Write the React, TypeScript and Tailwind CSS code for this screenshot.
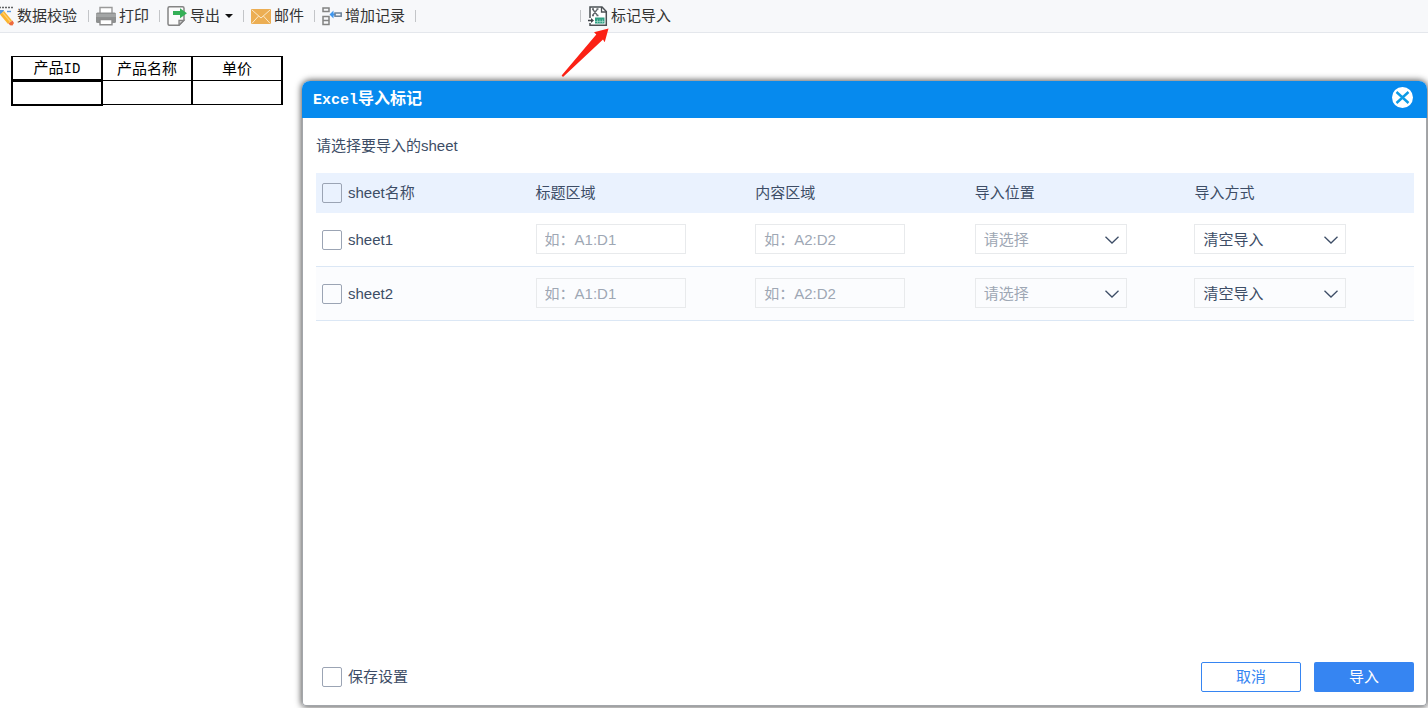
import type { ReactNode } from 'react';

interface SheetRow {
  id: string;
  name: string;
}

const sheets: SheetRow[] = [
  { id: 's1', name: 'sheet1' },
  { id: 's2', name: 'sheet2' },
];

const columns = ['标题区域', '内容区域', '导入位置', '导入方式'];

function CheckIcon() {
  return (
    <svg width="20" height="20" viewBox="0 0 20 20" fill="none" className="shrink-0">
      <path d="M5 1.500h14" stroke="#5f6264" strokeWidth="1.400" strokeDasharray="2 1" />
      <path d="M13 5.500h4" stroke="#5b9be0" strokeWidth="1.400" />
      <path d="M5 4h5l-1 2.500-4 2.500z" fill="#5b9be0" />
      <path d="M6 8.500l4-3.500 8 9.500-4 3.500z" fill="#fbb42f" />
      <path d="M8 6.800l1-.8 8 9.500-1 .8z" fill="#fdd078" />
      <path d="M14.500 17.500l4-3 1.500 2.500-1.500 2.500-2.500-.2z" fill="#ee6a3c" />
    </svg>
  );
}

function PrintIcon() {
  return (
    <svg width="20" height="20" viewBox="0 0 20 20" className="shrink-0">
      <path d="M4 8V1.500h12V8" fill="#fff" stroke="#9a9a9a" strokeWidth="1.400" />
      <rect x="0" y="6.500" width="20" height="10.500" rx="1.500" fill="#8f9191" />
      <rect x="0" y="8" width="20" height="3" fill="#a3a5a5" />
      <path d="M4 13.500h12v5.200H4z" fill="#fff" stroke="#8c8c8c" strokeWidth="1.400" />
    </svg>
  );
}

function ExportIcon() {
  return (
    <svg width="20" height="20" viewBox="0 0 20 20" className="shrink-0">
      <path d="M2.500 .8h13q1.500 0 1.500 1.500v12l-5 5H2.500q-1.500 0-1.500-1.500V2.300q0-1.500 1.500-1.500z" fill="#fbfbfb" stroke="#848484" strokeWidth="1.500" />
      <path d="M16.800 14.300h-4.800v4.800z" fill="#ccc" stroke="#848484" strokeWidth="1.300" />
      <path d="M6 5h7V2.300l7 5-7 5V9H6z" fill="#35b057" />
    </svg>
  );
}

function MailIcon() {
  return (
    <svg width="20" height="20" viewBox="0 0 20 20" fill="none" className="shrink-0">
      <rect x="0" y="3" width="20" height="15" rx="1" fill="#ecae53" />
      <path d="M1 4l9 8 9-8M1 17.300l6.500-7.200M19 17.300l-6.500-7.200" stroke="#fbeacb" strokeWidth="1" />
    </svg>
  );
}

function AddRecordIcon() {
  return (
    <svg width="20" height="20" viewBox="0 0 20 20" fill="none" className="shrink-0">
      <path d="M1 2h6v3.500H1zM1 10.500h6v8H1zM1 14.500h6" stroke="#838383" strokeWidth="1.500" />
      <path d="M7.500 8.500l4-4v3h2v2h-2v3z" fill="#3f96ee" />
      <rect x="13" y="7" width="6.200" height="3.200" stroke="#6c8299" strokeWidth="1.500" />
    </svg>
  );
}

function MarkImportIcon() {
  return (
    <svg width="20" height="20" viewBox="0 0 20 20" fill="none" className="shrink-0">
      <path d="M2 12V1h12l4.300 4.500v13.700H2V17" fill="#fff" stroke="#4b5054" strokeWidth="1.500" />
      <path d="M13.500 1v5h5" stroke="#4b5054" strokeWidth="1.300" />
      <path d="M4.500 3l5 6.500M9.500 3l-5 6.500M4 3h2M8.500 3h2M4 9.500h2M8.500 9.500h2" stroke="#63686c" strokeWidth="1.300" />
      <path d="M0 14.500h4" stroke="#3e4347" strokeWidth="1.500" />
      <path d="M3 12l3 2.500-3 2.500z" fill="#3e4347" />
      <rect x="7" y="11.500" width="9.500" height="6" fill="#2f9f83" />
      <path d="M9.500 13.500v3.500M12 13.500v3.500M14.500 13.500v3.500M7 15.500h9.500" stroke="#b5e0d3" strokeWidth=".6" />
    </svg>
  );
}

function Separator() {
  return <span className="h-3 w-px shrink-0 bg-[#c3c5c8]" />;
}

function ToolButton({ icon, children }: { icon: ReactNode; children: ReactNode }) {
  return (
    <button type="button" className="mr-2.5 ml-[7px] flex shrink-0 items-center gap-[3px] whitespace-nowrap">
      {icon}
      {children}
    </button>
  );
}

function Checkbox({ id }: { id: string }) {
  return (
    <input
      id={id}
      type="checkbox"
      className="size-5 shrink-0 appearance-none rounded-xs border border-[#9ba4b4] checked:bg-[#3685f2]"
    />
  );
}

function Select({ label, options, muted }: { label: string; options: string[]; muted?: boolean }) {
  return (
    <div className="relative w-[152px]">
      <select
        aria-label={label}
        className={`block h-[30px] w-full appearance-none rounded-none border border-[#e8eaec] bg-transparent px-2 pt-0.5 ${
          muted ? 'text-[#9ea7b4]' : 'text-[#3d4d66]'
        }`}
      >
        {options.map((option) => (
          <option key={option}>{option}</option>
        ))}
      </select>
      <svg
        width="14"
        height="8"
        viewBox="0 0 14 8"
        fill="none"
        className="pointer-events-none absolute top-3 right-2"
      >
        <path d="M.5 .8L7 7 13.500 .8" stroke="#3d4d66" strokeWidth="1.300" />
      </svg>
    </div>
  );
}

function Toolbar() {
  return (
    <header className="flex h-[33px] items-center overflow-hidden border-b border-[#e4e7ec] bg-[#f7f8fa] text-[#333]">
      <div className="mr-px -ml-[13px] flex items-center">
        <ToolButton icon={<CheckIcon />}>数据校验</ToolButton>
      </div>
      <Separator />
      <ToolButton icon={<PrintIcon />}>打印</ToolButton>
      <Separator />
      <ToolButton icon={<ExportIcon />}>
        导出
        <svg width="8" height="4" viewBox="0 0 8 4" className="ml-0.5">
          <path d="M0 0h8L4 4z" fill="#111" />
        </svg>
      </ToolButton>
      <Separator />
      <ToolButton icon={<MailIcon />}>邮件</ToolButton>
      <Separator />
      <ToolButton icon={<AddRecordIcon />}>增加记录</ToolButton>
      <Separator />
      <div className="ml-[164px] flex items-center">
        <Separator />
        <ToolButton icon={<MarkImportIcon />}>标记导入</ToolButton>
      </div>
    </header>
  );
}

function ProductTable() {
  return (
    <table className="mt-[23px] ml-[11px] w-[272px] table-fixed border-collapse text-black">
      <thead>
        <tr className="h-6">
          <th className="border-x-2 border-y border-black p-0 leading-5 font-normal">
            产品<span className="font-['Liberation_Mono',monospace] text-sm">ID</span>
          </th>
          <th className="border-x-2 border-y border-black p-0 leading-5 font-normal">产品名称</th>
          <th className="border-x-2 border-y border-black p-0 leading-5 font-normal">单价</th>
        </tr>
      </thead>
      <tbody>
        <tr className="h-6">
          <td className="border-2 border-t-3 border-black" />
          <td className="border-x-2 border-y border-black" />
          <td className="border-x-2 border-y border-black" />
        </tr>
      </tbody>
    </table>
  );
}

function ImportDialog() {
  return (
    <section
      role="dialog"
      aria-label="Excel导入标记"
      className="absolute top-[81px] right-px bottom-0.5 left-[302px] flex flex-col rounded-t-lg rounded-b shadow-[0_0_6px_1px_rgba(0,0,0,0.65)]"
    >
      <div className="flex h-[37px] shrink-0 items-center justify-between rounded-t-lg bg-[#068aee] pr-3.5 pl-[11px] text-white">
        <h1 className="text-base font-bold">
          <span className="font-['Liberation_Mono',monospace] text-[15px]">Excel</span>导入标记
        </h1>
        <button type="button" aria-label="关闭" className="mb-1">
          <svg width="21" height="21" viewBox="0 0 21 21" className="block">
            <circle cx="10.500" cy="10.500" r="10.500" fill="#fff" />
            <path d="M4.500 5l12 11M16.500 5l-12 11" stroke="#0b9be6" strokeWidth="2.400" />
          </svg>
        </button>
      </div>

      <div className="flex grow flex-col rounded-b border border-t-0 border-[#a3a6aa] bg-white pt-[18px] pr-3 pb-[13px] pl-[13px] text-[#3d4d66]">
        <p className="mb-[17px] leading-5">请选择要导入的sheet</p>

        <table className="w-full table-fixed border-separate border-spacing-0 text-left">
          <thead>
            <tr className="h-10 bg-[#eaf2fe]">
              <th className="p-0 font-normal">
                <div className="flex items-center gap-1.5 pl-1.5">
                  <Checkbox id="all" />
                  <label htmlFor="all">sheet名称</label>
                </div>
              </th>
              {columns.map((column) => (
                <th key={column} className="p-0 font-normal">
                  {column}
                </th>
              ))}
            </tr>
          </thead>
          <tbody>
            {sheets.map((sheet) => (
              <tr key={sheet.id} className="h-[54px] even:bg-[#fbfcfe] *:border-b *:border-[#dbe7f5]">
                <td className="p-0">
                  <div className="flex items-center gap-1.5 pl-1.5">
                    <Checkbox id={sheet.id} />
                    <label htmlFor={sheet.id}>{sheet.name}</label>
                  </div>
                </td>
                <td className="p-0 pb-px">
                  <input
                    type="text"
                    aria-label="标题区域"
                    placeholder="如：A1:D1"
                    className="block h-[30px] w-[150px] border border-[#e8eaec] px-2 placeholder:text-[#9ea7b4]"
                  />
                </td>
                <td className="p-0 pb-px">
                  <input
                    type="text"
                    aria-label="内容区域"
                    placeholder="如：A2:D2"
                    className="block h-[30px] w-[150px] border border-[#e8eaec] px-2 placeholder:text-[#9ea7b4]"
                  />
                </td>
                <td className="p-0 pb-px">
                  <Select label="导入位置" options={['请选择']} muted />
                </td>
                <td className="p-0 pb-px">
                  <Select label="导入方式" options={['清空导入']} />
                </td>
              </tr>
            ))}
          </tbody>
        </table>

        <div className="mt-auto flex items-center">
          <div className="flex items-center gap-1.5 pl-1.5">
            <Checkbox id="save" />
            <label htmlFor="save">保存设置</label>
          </div>
          <button
            type="button"
            className="ml-auto h-[30px] w-[100px] rounded-xs border border-[#3685f2] text-[#3685f2]"
          >
            取消
          </button>
          <button type="button" className="ml-[13px] h-[30px] w-[100px] rounded-xs bg-[#3685f2] text-white">
            导入
          </button>
        </div>
      </div>
    </section>
  );
}

export default function App() {
  return (
    <div className="relative min-h-screen overflow-hidden bg-white font-['Liberation_Sans','Noto_Sans_CJK_SC',sans-serif] text-[15px] leading-5">
      <Toolbar />
      <ProductTable />
      <ImportDialog />
      <svg
        width="48"
        height="50"
        viewBox="0 0 48 50"
        className="pointer-events-none absolute top-7 left-[561px]"
      >
        <path d="M47.500 .5L33 4.200l2.300 2.300L.6 47.500l1.400 1.400L42 11.500l1.700 2.800z" fill="#fb2115" />
      </svg>
    </div>
  );
}
